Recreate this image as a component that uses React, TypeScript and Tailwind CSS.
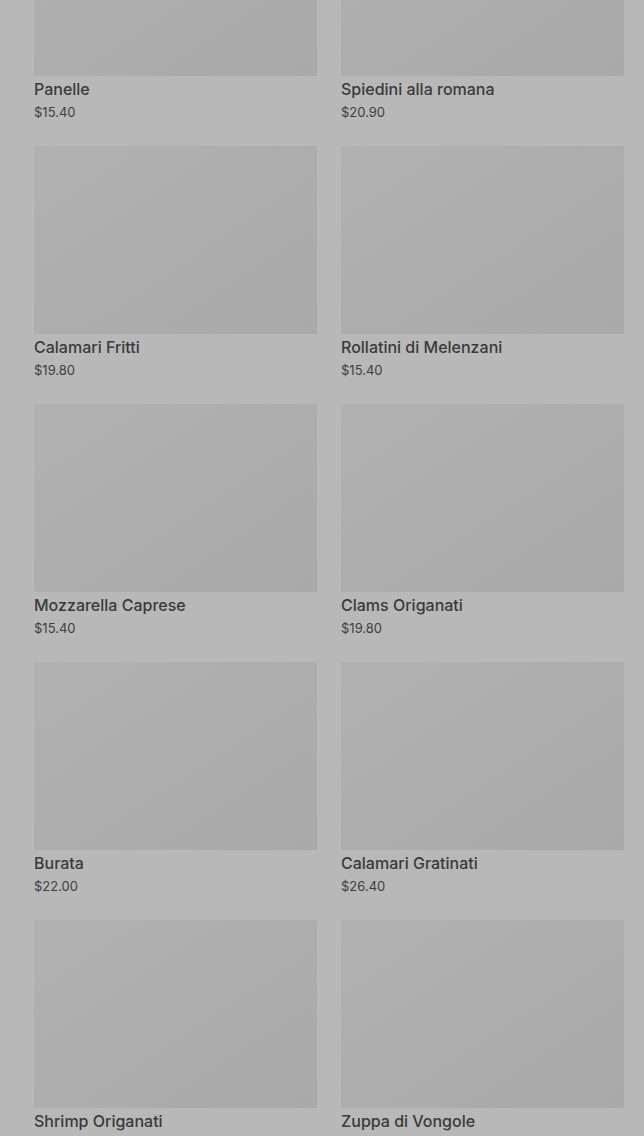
import React from 'react'

const items = [
  { name: 'Panelle', price: '$15.40' },
  { name: 'Spiedini alla romana', price: '$20.90' },
  { name: 'Calamari Fritti', price: '$19.80' },
  { name: 'Rollatini di Melenzani', price: '$15.40' },
  { name: 'Mozzarella Caprese', price: '$15.40' },
  { name: 'Clams Origanati', price: '$19.80' },
  { name: 'Burata', price: '$22.00' },
  { name: 'Calamari Gratinati', price: '$26.40' },
  { name: 'Shrimp Origanati', price: '$19.80' },
  { name: 'Zuppa di Vongole', price: '$22.00' },
]

const App = () => {
  return (
    <div className="w-[644px] h-[1136px] overflow-hidden bg-[#b8b8b8] font-['Inter',sans-serif]">
      <div className="-mt-[112px] pl-[34px] pr-[20px] grid grid-cols-2 gap-x-6 gap-y-6">
        {items.map((item) => (
          <div key={item.name} className="flex flex-col">
            {/* Placeholder Image */}
            <div className="h-[188px] w-full bg-gradient-to-br from-[#b1b1b1] to-[#a9a9a9]"></div>
            <div className="mt-px flex flex-col">
              <span className="text-[16px] leading-6 font-medium text-[#3a3a3a]">{item.name}</span>
              <span className="mt-px text-[13px] leading-5 text-[#3e3e3e]">{item.price}</span>
            </div>
          </div>
        ))}
      </div>
    </div>
  )
}

export default App
